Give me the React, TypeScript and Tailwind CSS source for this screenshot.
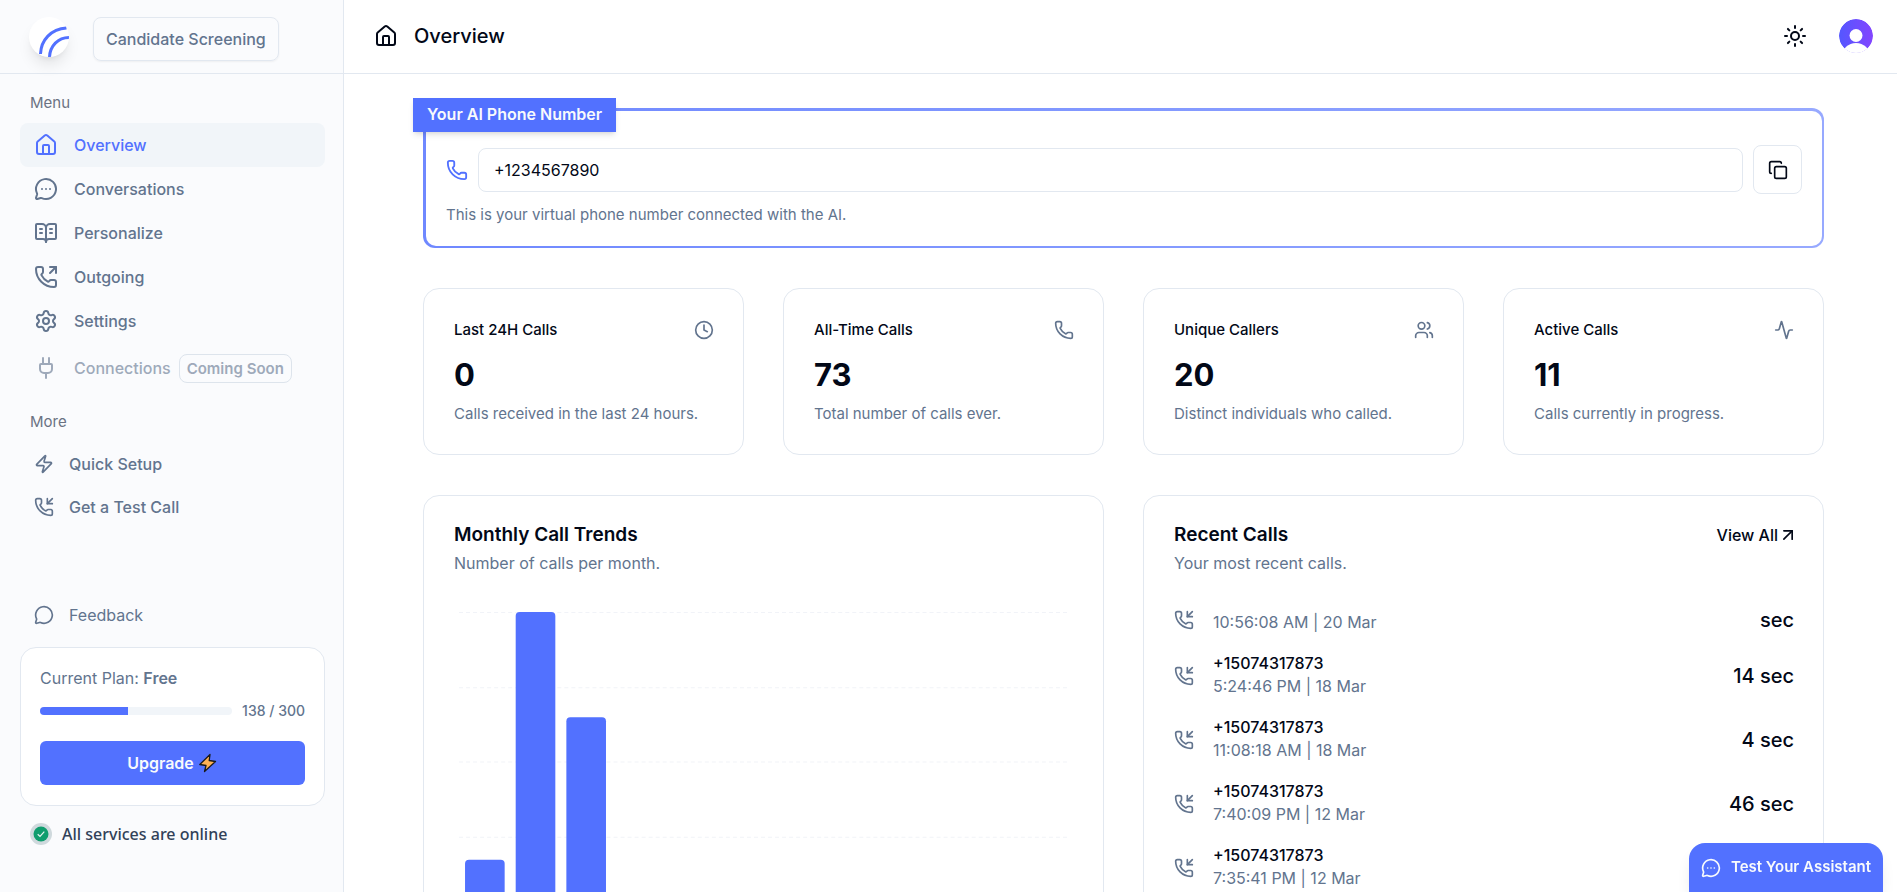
import React from "react";
import {
  Activity,
  ArrowUpRight,
  BookOpenText,
  Clock,
  Copy,
  House,
  MessageCircle,
  MessageCircleMore,
  Phone,
  PhoneIncoming,
  PhoneOutgoing,
  Plug,
  Settings,
  Sun,
  Users,
  Zap,
  type LucideIcon,
} from "lucide-react";

const navItems: { label: string; icon: LucideIcon }[] = [
  { label: "Conversations", icon: MessageCircleMore },
  { label: "Personalize", icon: BookOpenText },
  { label: "Outgoing", icon: PhoneOutgoing },
  { label: "Settings", icon: Settings },
];

const stats: { title: string; value: string; note: string; icon: LucideIcon }[] = [
  { title: "Last 24H Calls", value: "0", note: "Calls received in the last 24 hours.", icon: Clock },
  { title: "All-Time Calls", value: "73", note: "Total number of calls ever.", icon: Phone },
  { title: "Unique Callers", value: "20", note: "Distinct individuals who called.", icon: Users },
  { title: "Active Calls", value: "11", note: "Calls currently in progress.", icon: Activity },
];

const calls = [
  { number: "", time: "10:56:08 AM | 20 Mar", duration: "sec" },
  { number: "+15074317873", time: "5:24:46 PM | 18 Mar", duration: "14 sec" },
  { number: "+15074317873", time: "11:08:18 AM | 18 Mar", duration: "4 sec" },
  { number: "+15074317873", time: "7:40:09 PM | 12 Mar", duration: "46 sec" },
  { number: "+15074317873", time: "7:35:41 PM | 12 Mar", duration: "" },
];

const bars = [52, 299, 194];

const Logo: React.FC = () => (
  <div className="w-10 h-10 rounded-full bg-white shadow-lg overflow-hidden shrink-0">
    <svg viewBox="0 0 40 40" fill="none" stroke="#5271ff" strokeWidth="3" aria-label="Logo">
      <path d="M11.500 37C12 23 22 12 37.500 11" />
      <path d="M20.500 40C21 29 29 20.500 40 20.500" />
    </svg>
  </div>
);

const BoltIcon: React.FC = () => (
  <svg className="w-5 h-5" viewBox="0 0 20 20" aria-hidden="true">
    <path
      d="M12 1.500 1.800 11.500l6.200 1L6.500 18.500 17.500 8.500l-6.300-1z"
      fill="#ffb153"
      stroke="#1a1a1a"
      strokeWidth="1.300"
      strokeLinejoin="round"
    />
  </svg>
);

const Sidebar: React.FC = () => (
  <aside className="flex flex-col w-[344px] shrink-0 border-r border-slate-200 bg-[#fafbfd] text-base text-slate-500">
    <div className="flex items-center gap-6 h-[74px] shrink-0 border-b border-slate-200 px-[29px]">
      <Logo />
      <button className="h-11 px-3 mt-1 rounded-lg border border-slate-200 font-medium shadow-xs">
        Candidate Screening
      </button>
    </div>

    <nav className="flex flex-col pl-5 pr-[18px] pt-[18px] font-medium" aria-label="Menu">
      <p className="px-2.5 mb-[9px] text-[15px] leading-[22px] font-normal text-gray-500">Menu</p>
      <a href="#overview" className="flex items-center gap-4 h-11 px-3.5 rounded-lg bg-slate-100 text-[#5271ff]">
        <House size={24} />
        Overview
      </a>
      {navItems.map(({ label, icon: Icon }) => (
        <a key={label} href={`#${label.toLowerCase()}`} className="flex items-center gap-4 h-11 px-3.5 rounded-lg">
          <Icon size={24} />
          {label}
        </a>
      ))}
      <a href="#connections" className="flex items-center gap-4 h-[50px] px-3.5 opacity-60" aria-disabled="true">
        <Plug size={24} />
        <span className="flex items-center gap-2">
          Connections
          <span className="px-[7px] h-[29px] leading-[27px] rounded-lg border border-slate-300 text-[15px] font-semibold">
            Coming Soon
          </span>
        </span>
      </a>

      <p className="px-2.5 mt-[18px] mb-[9px] text-[15px] leading-[22px] font-normal text-gray-500">More</p>
      <a href="#setup" className="flex items-center gap-[15px] h-[43px] px-3.5">
        <Zap size={20} />
        Quick Setup
      </a>
      <a href="#test-call" className="flex items-center gap-[15px] h-[43px] px-3.5">
        <PhoneIncoming size={20} />
        Get a Test Call
      </a>
    </nav>

    <div className="flex flex-col pl-5 pr-[18px] pb-[46px] mt-auto">
      <a href="#feedback" className="flex items-center gap-[15px] h-11 px-3.5 mb-2.5">
        <MessageCircle size={20} />
        Feedback
      </a>
      <div className="p-[19px] pb-5 rounded-2xl border border-slate-200 bg-white">
        <p className="leading-[22px]">
          Current Plan: <strong className="font-semibold">Free</strong>
        </p>
        <div className="flex items-center gap-2.5 mt-[11px] mb-[19px] h-[22px]">
          <div className="flex-1 h-2 rounded-full bg-slate-100 overflow-hidden">
            <div className="h-full bg-[#5271ff]" style={{ width: `${(138 / 300) * 100}%` }} />
          </div>
          <span className="text-sm font-medium">138 / 300</span>
        </div>
        <button className="flex items-center justify-center gap-1 w-full h-11 rounded-md bg-[#5271ff] font-semibold text-slate-50">
          Upgrade
          <BoltIcon />
        </button>
      </div>
      <div className="flex items-center gap-2.5 mt-4 px-2.5">
        <svg className="w-[22px] h-[22px]" viewBox="0 0 22 22" aria-hidden="true">
          <circle cx="11" cy="11" r="11" fill="#cfd9dd" />
          <circle cx="11" cy="11" r="7.500" fill="#0f9d6e" />
          <path d="m7.700 11.300 2.300 2.200 4.300-4.800" fill="none" stroke="#e6f5f0" strokeWidth="1.200" />
        </svg>
        <span className="font-['Noto_Sans',sans-serif] leading-6 font-medium text-slate-700">
          All services are online
        </span>
      </div>
    </div>
  </aside>
);

const Header: React.FC = () => (
  <header className="flex items-center h-[74px] shrink-0 border-b border-slate-200 pl-[30px] pr-6 pb-px">
    <House size={24} />
    <h1 className="ml-4 text-xl font-medium">Overview</h1>
    <button className="ml-auto mr-8" aria-label="Toggle theme">
      <Sun size={24} />
    </button>
    <button aria-label="Account">
      <svg className="w-[34px] h-[34px]" viewBox="0 0 34 34" aria-hidden="true">
        <defs>
          <linearGradient id="avatar" x1="0" x2="1">
            <stop offset="0" stopColor="#5457ff" />
            <stop offset="1" stopColor="#8345ff" />
          </linearGradient>
          <clipPath id="round">
            <circle cx="17" cy="17" r="17" />
          </clipPath>
        </defs>
        <g clipPath="url(#round)">
          <circle cx="17" cy="17" r="17" fill="url(#avatar)" />
          <circle cx="17" cy="16.500" r="6.500" fill="#fff" />
          <ellipse cx="17" cy="37" rx="14" ry="13" fill="#fff" />
        </g>
      </svg>
    </button>
  </header>
);

const PhoneNumberCard: React.FC = () => (
  <section className="relative rounded-xl bg-linear-to-r from-[#6f88ff] to-[#97a9ff] pt-[3px] pl-[3px] pr-0.5 pb-0.5">
    <label
      htmlFor="ai-phone"
      className="absolute -top-2.5 -left-2.5 px-3.5 h-[34px] leading-[33px] bg-[#5271ff] text-base font-semibold text-slate-50 shadow-md"
    >
      Your AI Phone Number
    </label>
    <div className="rounded-[10px] bg-white px-5 pt-[34px] pb-5">
      <div className="flex items-center">
        <Phone size={22} className="mr-2.5 text-[#5271ff]" />
        <input
          id="ai-phone"
          type="text"
          readOnly
          value="+1234567890"
          className="flex-1 min-w-0 h-11 px-[15px] rounded-lg border border-slate-200 text-base"
        />
        <button
          className="flex items-center justify-center w-[49px] h-[49px] ml-2.5 rounded-lg border border-slate-200"
          aria-label="Copy phone number"
        >
          <Copy size={20} />
        </button>
      </div>
      <p className="mt-2.5 text-[15px] leading-[22px] text-slate-500">
        This is your virtual phone number connected with the AI.
      </p>
    </div>
  </section>
);

const StatCards: React.FC = () => (
  <section className="grid grid-cols-4 gap-[39px] mt-10">
    {stats.map(({ title, value, note, icon: Icon }) => (
      <article key={title} className="h-[167px] pl-[30px] pr-[29px] pt-[30px] rounded-2xl border border-slate-200">
        <div className="flex items-center justify-between h-[22px]">
          <h2 className="text-[15px] font-medium">{title}</h2>
          <Icon size={20} className="text-slate-500" />
        </div>
        <p className="mt-4 text-[31px] leading-9 font-bold">{value}</p>
        <p className="mt-2.5 text-[15px] leading-[22px] text-slate-500">{note}</p>
      </article>
    ))}
  </section>
);

const TrendsCard: React.FC = () => (
  <article className="pl-[30px] pr-[29px] pt-[27px] pb-16 rounded-2xl border border-slate-200">
    <h2 className="text-[19px] leading-6 font-semibold">Monthly Call Trends</h2>
    <p className="mt-[5px] text-base leading-[22px] text-slate-500">Number of calls per month.</p>
    <svg className="w-full px-[5px] mt-[38px]" viewBox="0 0 608 299" role="img" aria-label="Calls per month">
      {[0, 75, 149, 224, 298].map((y) => (
        <line key={y} x1="0" x2="608" y1={y + 0.5} y2={y + 0.5} stroke="#f1f3f8" strokeDasharray="4 3" />
      ))}
      {bars.map((height, i) => (
        <rect key={i} x={6 + i * 50.500} y={299 - height} width="39.500" height={height + 4} rx="4" fill="#5271ff" />
      ))}
    </svg>
  </article>
);

const RecentCallsCard: React.FC = () => (
  <article className="pl-[30px] pr-[29px] pt-[27px] pb-8 rounded-2xl border border-slate-200">
    <div className="flex items-center justify-between">
      <h2 className="text-[19px] leading-6 font-semibold">Recent Calls</h2>
      <a href="#calls" className="flex items-center -mr-1 text-base leading-6 font-medium">
        View All
        <ArrowUpRight size={20} />
      </a>
    </div>
    <p className="mt-[5px] text-base leading-[22px] text-slate-500">Your most recent calls.</p>
    <ul className="flex flex-col gap-[22px] mt-[33px]">
      {calls.map(({ number, time, duration }) => (
        <li key={time} className="flex items-center">
          <PhoneIncoming size={20} className="mr-[19px] text-slate-500" />
          <div>
            {number && <p className="text-base leading-4 font-medium">{number}</p>}
            <p className="mt-1 text-base leading-[22px] text-slate-500">{time}</p>
          </div>
          {duration && <span className="ml-auto text-xl leading-6 font-medium">{duration}</span>}
        </li>
      ))}
    </ul>
  </article>
);

const App: React.FC = () => {
  return (
    <div className="flex h-screen overflow-hidden bg-white font-['Inter',sans-serif] text-[#020817]">
      <Sidebar />
      <div className="flex flex-col flex-1 min-w-0">
        <Header />
        <main className="flex-1 min-h-0 overflow-hidden pt-[34px] pl-[79px] pr-[73px]">
          <PhoneNumberCard />
          <StatCards />
          <section className="grid grid-cols-2 gap-[39px] mt-10">
            <TrendsCard />
            <RecentCallsCard />
          </section>
        </main>
      </div>
      <button className="fixed bottom-0 right-3.5 flex items-center gap-2.5 h-[49px] px-3 rounded-t-2xl bg-[#5271ff] text-[15px] font-semibold text-slate-50 shadow-lg">
        <MessageCircleMore size={20} />
        Test Your Assistant
      </button>
    </div>
  );
};

export default App;
